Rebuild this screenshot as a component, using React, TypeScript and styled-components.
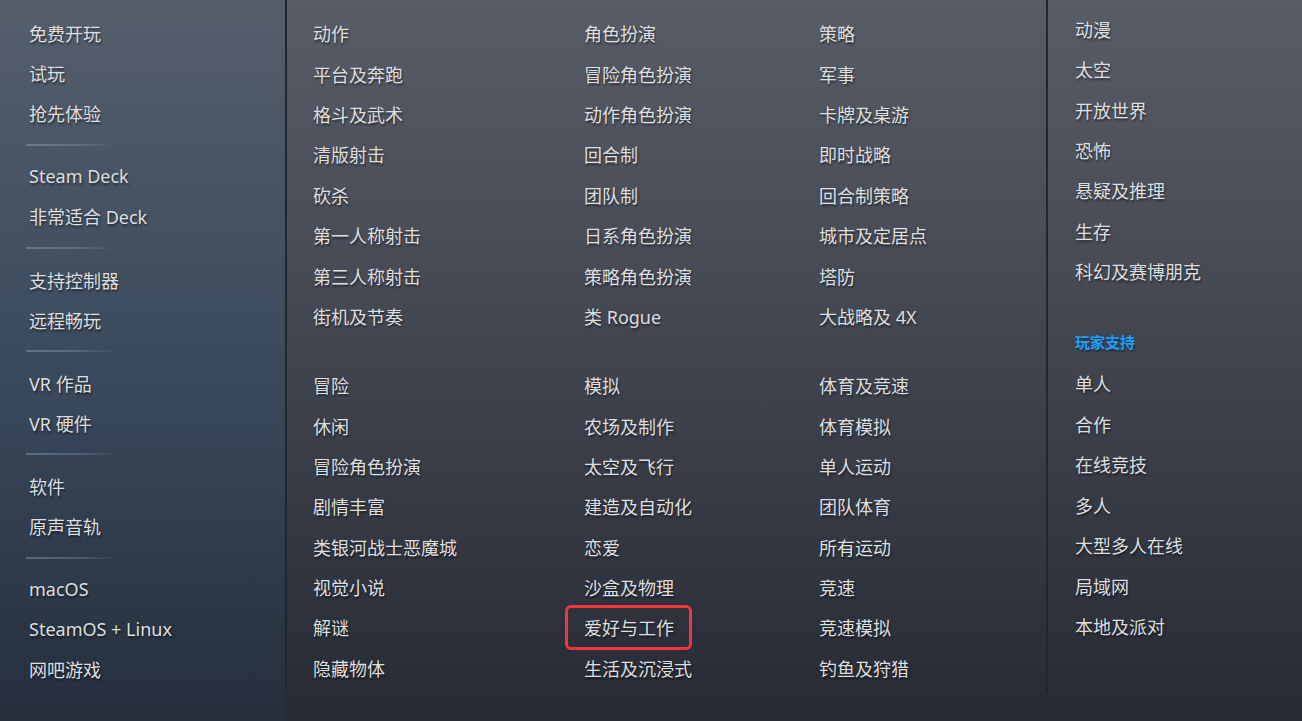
import styled, { createGlobalStyle } from "styled-components";

const GlobalStyle = createGlobalStyle`
  html, body {
    margin: 0;
    padding: 0;
    background: #262a33;
  }
  * {
    box-sizing: border-box;
  }
`;

const Menu = styled.div`
  display: flex;
  width: 1302px;
  height: 721px;
  overflow: hidden;
  font-family: "Noto Sans", "Noto Sans CJK SC", sans-serif;
  background: linear-gradient(180deg, #585c66 0%, #474c57 35%, #353a45 70%, #262a33 100%);
`;

const Sidebar = styled.div`
  width: 285px;
  flex-shrink: 0;
  padding: 13px 0 0 26px;
  background: linear-gradient(
    180deg,
    rgba(70, 110, 150, 0.12) 0%,
    rgba(40, 95, 140, 0.22) 50%,
    rgba(30, 70, 110, 0.14) 100%
  );
`;

const Divider = styled.div`
  height: 23px;
  display: flex;
  align-items: center;

  &::before {
    content: "";
    display: block;
    width: 88px;
    height: 2px;
    background: linear-gradient(90deg, rgba(170, 190, 210, 0.35) 0%, rgba(170, 190, 210, 0.25) 60%, rgba(170, 190, 210, 0) 100%);
  }
`;

const Item = styled.div<{ $indent?: number; $boxed?: boolean; $pitch?: number }>`
  position: relative;
  height: ${(p) => p.$pitch ?? 40.4}px;
  width: fit-content;
  display: flex;
  align-items: center;
  padding-left: ${(p) => p.$indent ?? 0}px;
  font-size: 18px;
  color: #dcdedf;
  text-shadow: 1px 2px 2px rgba(0, 0, 0, 0.45);
  white-space: nowrap;

  ${(p) =>
    p.$boxed &&
    `
    &::after {
      content: "";
      position: absolute;
      top: -2px;
      bottom: -2px;
      left: -19px;
      right: -18px;
      border: 3px solid #f4363c;
      border-radius: 6px;
    }
  `}
`;

const Genres = styled.div`
  display: flex;
  width: 763px;
  height: 692px;
  flex-shrink: 0;
  padding: 13px 0 0 26px;
  border-left: 2px solid #23262d;
  border-right: 2px solid #23262d;
`;

const GenreColumn = styled.div<{ $width: number }>`
  width: ${(p) => p.$width}px;
  flex-shrink: 0;
  display: flex;
  flex-direction: column;
  gap: 28.8px;
`;

const Group = styled.div`
  display: flex;
  flex-direction: column;
`;

const Themes = styled.div`
  flex: 1;
  padding: 9px 0 0 27px;
  display: flex;
  flex-direction: column;
`;

const SectionTitle = styled.div`
  height: 44px;
  margin-top: 28px;
  display: flex;
  align-items: center;
  font-size: 15px;
  font-weight: 700;
  color: #1a9fff;
  text-shadow: 1px 2px 2px rgba(0, 0, 0, 0.35);
`;

const sidebarGroups = [
  ["免费开玩", "试玩", "抢先体验"],
  ["Steam Deck", "非常适合 Deck"],
  ["支持控制器", "远程畅玩"],
  ["VR 作品", "VR 硬件"],
  ["软件", "原声音轨"],
  ["macOS", "SteamOS + Linux", "网吧游戏"],
];

const genreColumns = [
  {
    width: 271,
    groups: [
      ["动作", "平台及奔跑", "格斗及武术", "清版射击", "砍杀", "第一人称射击", "第三人称射击", "街机及节奏"],
      ["冒险", "休闲", "冒险角色扮演", "剧情丰富", "类银河战士恶魔城", "视觉小说", "解谜", "隐藏物体"],
    ],
  },
  {
    width: 235,
    groups: [
      ["角色扮演", "冒险角色扮演", "动作角色扮演", "回合制", "团队制", "日系角色扮演", "策略角色扮演", "类 Rogue"],
      ["模拟", "农场及制作", "太空及飞行", "建造及自动化", "恋爱", "沙盒及物理", "爱好与工作", "生活及沉浸式"],
    ],
  },
  {
    width: 227,
    groups: [
      ["策略", "军事", "卡牌及桌游", "即时战略", "回合制策略", "城市及定居点", "塔防", "大战略及 4X"],
      ["体育及竞速", "体育模拟", "单人运动", "团队体育", "所有运动", "竞速", "竞速模拟", "钓鱼及狩猎"],
    ],
  },
];

const themes = ["动漫", "太空", "开放世界", "恐怖", "悬疑及推理", "生存", "科幻及赛博朋克"];
const playerSupport = ["单人", "合作", "在线竞技", "多人", "大型多人在线", "局域网", "本地及派对"];

export default function App() {
  return (
    <>
      <GlobalStyle />
      <Menu>
        <Sidebar>
          {sidebarGroups.map((group, gi) => (
            <div key={gi}>
              {gi > 0 && <Divider />}
              {group.map((label) => (
                <Item key={label} $indent={3} $pitch={40.1}>
                  {label}
                </Item>
              ))}
            </div>
          ))}
        </Sidebar>

        <Genres>
          {genreColumns.map((col, ci) => (
            <GenreColumn key={ci} $width={col.width}>
              {col.groups.map((group, gi) => (
                <Group key={gi}>
                  {group.map((label) => (
                    <Item key={label} $boxed={label === "爱好与工作"}>
                      {label}
                    </Item>
                  ))}
                </Group>
              ))}
            </GenreColumn>
          ))}
        </Genres>

        <Themes>
          {themes.map((label) => (
            <Item key={label} $pitch={40.3}>
              {label}
            </Item>
          ))}
          <SectionTitle>玩家支持</SectionTitle>
          {playerSupport.map((label) => (
            <Item key={label} $pitch={40.5}>
              {label}
            </Item>
          ))}
        </Themes>
      </Menu>
    </>
  );
}
